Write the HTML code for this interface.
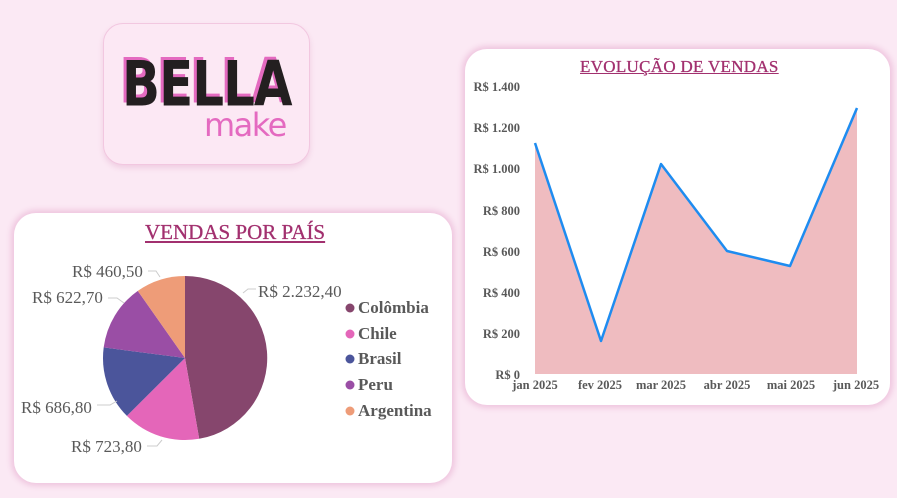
<!DOCTYPE html>
<html><head><meta charset="utf-8"><style>
body{margin:0;width:897px;height:498px;background:#fbe9f4;position:relative;overflow:hidden;font-family:"Liberation Serif",serif}
.card{position:absolute;background:#fff;border-radius:22px;box-shadow:0 0 6px 3px #efc6df}
.t{position:absolute;white-space:nowrap}
.logo{position:absolute;font:bold 52px 'DejaVu Sans',sans-serif;letter-spacing:-1px;transform:scale(0.96,1.2);transform-origin:left top;line-height:1}
</style></head><body>
<div class="card" style="left:103px;top:23px;width:205px;height:140px;background:#fce8f4;border:1px solid #f2c7e0;box-shadow:0 3px 6px #f0cde2;border-radius:20px"></div>
<div class="logo" style="left:119px;top:51px;color:#e46ac0">BELLA</div>
<div class="logo" style="left:122px;top:54px;color:#231f20">BELLA</div>
<div class="t" style="left:204px;top:106px;font:32px 'DejaVu Sans',sans-serif;color:#e46ac0;letter-spacing:-1.5px">make</div>

<div class="card" style="left:14px;top:213px;width:438px;height:270px"></div>
<div class="t" style="left:145px;top:220px;font-size:21px;color:#a2306f;text-decoration:underline;-webkit-text-stroke:0.3px #a2306f">VENDAS POR PAÍS</div>
<svg style="position:absolute;left:0;top:0" width="897" height="498">
<path d="M185 358 L185 276 A82 82 0 0 1 199.2 438.8Z" fill="#86466d"/>
<path d="M185 358 L199.2 438.8 A82 82 0 0 1 126.9 415.9Z" fill="#e466b9"/>
<path d="M185 358 L126.9 415.9 A82 82 0 0 1 103.7 347.4Z" fill="#4b559b"/>
<path d="M185 358 L103.7 347.4 A82 82 0 0 1 137.8 290.9Z" fill="#9a4ea5"/>
<path d="M185 358 L137.8 290.9 A82 82 0 0 1 185 276Z" fill="#ee9c78"/>
<g stroke="#ccc" fill="none" stroke-width="1">
<path d="M243 293 L248 289 L256 289"/><path d="M148 271 L156 271 L160 277"/>
<path d="M108 298 L117 298 L124 303"/><path d="M97 405 L110 405 L117 401"/>
<path d="M147 446 L157 446 L162 440"/></g>
<g font-family="Liberation Serif" font-size="17" fill="#595959">
<text x="258" y="297">R$ 2.232,40</text><text x="72" y="277">R$ 460,50</text>
<text x="32" y="303">R$ 622,70</text><text x="21" y="413">R$ 686,80</text>
<text x="71" y="452">R$ 723,80</text></g>
<g font-family="Liberation Serif" font-size="17" font-weight="bold" fill="#595959">
<circle cx="350" cy="308" r="4.5" fill="#86466d"/><text x="358" y="313">Colômbia</text>
<circle cx="350" cy="334" r="4.5" fill="#e466b9"/><text x="358" y="339">Chile</text>
<circle cx="350" cy="359" r="4.5" fill="#4b559b"/><text x="358" y="364">Brasil</text>
<circle cx="350" cy="385" r="4.5" fill="#9a4ea5"/><text x="358" y="390">Peru</text>
<circle cx="350" cy="411" r="4.5" fill="#ee9c78"/><text x="358" y="416">Argentina</text></g>
</svg>

<div class="card" style="left:465px;top:49px;width:425px;height:356px"></div>
<div class="t" style="left:580px;top:57px;font-size:17px;color:#a2306f;text-decoration:underline;letter-spacing:0.3px;-webkit-text-stroke:0.3px #a2306f">EVOLUÇÃO DE VENDAS</div>
<svg style="position:absolute;left:0;top:0" width="897" height="498">
<path d="M535 374 L535 143 L601 341 L661 164 L727 251 L790 266 L857 108 L857 374Z" fill="#efbcc0"/>
<path d="M535 143 L601 341 L661 164 L727 251 L790 266 L857 108" stroke="#1e8cf0" stroke-width="2.5" fill="none" stroke-linejoin="round"/>
<g font-family="Liberation Serif" font-size="12.5" font-weight="bold" fill="#595959" text-anchor="end">
<text x="520" y="91">R$ 1.400</text><text x="520" y="132">R$ 1.200</text><text x="520" y="173">R$ 1.000</text>
<text x="520" y="215">R$ 800</text><text x="520" y="256">R$ 600</text><text x="520" y="297">R$ 400</text>
<text x="520" y="338">R$ 200</text><text x="520" y="379">R$ 0</text></g>
<g font-family="Liberation Serif" font-size="12.5" font-weight="bold" fill="#595959" text-anchor="middle">
<text x="535" y="389">jan 2025</text><text x="600" y="389">fev 2025</text><text x="661" y="389">mar 2025</text>
<text x="727" y="389">abr 2025</text><text x="791" y="389">mai 2025</text><text x="856" y="389">jun 2025</text></g>
</svg>
</body></html>
